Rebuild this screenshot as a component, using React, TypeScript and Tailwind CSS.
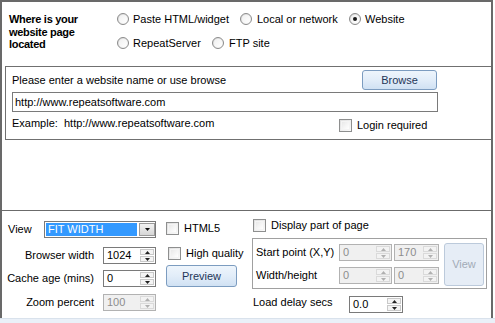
import React from 'react';

const Radio = ({ checked }: { checked?: boolean }) => (
    <span className="flex h-[12px] w-[12px] shrink-0 items-center justify-center rounded-full border border-[#8b8b8b] bg-linear-to-br from-[#d8d8d8] to-[#ffffff]">
        <span className="flex h-[8px] w-[8px] items-center justify-center rounded-full bg-linear-to-br from-[#f0f0f0] to-[#ffffff]">
            {checked && <span className="h-[4px] w-[4px] rounded-full bg-[#1a1a1a]" />}
        </span>
    </span>
);

const Check = () => (
    <span className="block h-[13px] w-[13px] shrink-0 border border-[#8e8f8f] bg-linear-to-br from-[#dedede] to-[#fbfbfb] p-px">
        <span className="block h-full w-full border border-[#f4f4f4] bg-linear-to-br from-[#e9e9e9] to-[#ffffff]" />
    </span>
);

const Arrow = ({ up, color }: { up?: boolean; color: string }) => (
    <svg width="5" height="3" viewBox="0 0 5 3">
        <polygon points={up ? '0,3 5,3 2.5,0' : '0,0 5,0 2.5,3'} fill={color} />
    </svg>
);

interface SpinProps {
    value: string;
    className: string;
    disabled?: boolean;
}

const Spin = ({ value, className, disabled }: SpinProps) => (
    <div
        className={`flex h-[17px] shrink-0 border ${
            disabled ? 'border-[#b2b2b2] bg-[#f0f0f0] text-[#8d8d8d]' : 'border-[#7a7a7a] bg-white text-black'
        } ${className}`}
    >
        <span className="flex flex-1 items-center pl-[3px] leading-none">{value}</span>
        <div className="flex w-[16px] flex-col gap-px p-px">
            <div className={`flex flex-1 items-center justify-center border ${disabled ? 'border-[#dadada] bg-[#f3f3f3]' : 'border-[#c9c9c9] bg-[#f4f4f4]'}`}>
                <Arrow up color={disabled ? '#b0b0b0' : '#222'} />
            </div>
            <div className={`flex flex-1 items-center justify-center border ${disabled ? 'border-[#dadada] bg-[#f3f3f3]' : 'border-[#c9c9c9] bg-[#f4f4f4]'}`}>
                <Arrow color={disabled ? '#b0b0b0' : '#222'} />
            </div>
        </div>
    </div>
);

const Button = ({ label, className }: { label: string; className: string }) => (
    <div
        className={`flex shrink-0 items-center justify-center rounded-[3px] border border-[#7c9cc0] bg-linear-to-b from-[#eef5fc] via-[#e2edf9] to-[#d0e1f3] text-[#1e3557] ${className}`}
    >
        {label}
    </div>
);

export default function App() {
    return (
        <div className="h-[323px] w-[495px] overflow-hidden bg-white font-['Liberation_Sans',Arial,sans-serif] text-[11px] text-black">
            <div className="flex h-[318px] w-[493px] flex-col border-x-2 border-t-2 border-[#696969]">
                {/* where is the page */}
                <div className="flex h-[208px] flex-col">
                    <div className="flex h-[64px]">
                        <div className="w-[115px] shrink-0 pl-[7px] pt-[11px] text-[11px] font-bold leading-[12.5px] tracking-[-0.3px]">
                            Where is your
                            <br />
                            website page
                            <br />
                            located
                        </div>
                        <div className="flex flex-col pt-[10px]">
                            <div className="flex h-[14px] items-center">
                                <div className="flex w-[123px] items-center gap-[4px]">
                                    <Radio />
                                    <span>Paste HTML/widget</span>
                                </div>
                                <div className="flex w-[109px] items-center gap-[5px]">
                                    <Radio />
                                    <span>Local or network</span>
                                </div>
                                <div className="flex items-center gap-[4px]">
                                    <Radio checked />
                                    <span>Website</span>
                                </div>
                            </div>
                            <div className="mt-[10px] flex h-[14px] items-center">
                                <div className="flex w-[95px] items-center gap-[4px]">
                                    <Radio />
                                    <span>RepeatServer</span>
                                </div>
                                <div className="flex items-center gap-[5px]">
                                    <Radio />
                                    <span>FTP site</span>
                                </div>
                            </div>
                        </div>
                    </div>

                    <div className="ml-[3px] h-[74px] border-y border-l border-[#707070] pl-[6px] pt-[3px]">
                        <div className="flex h-[20px] w-[426px] items-center justify-between">
                            <span>Please enter a website name or use browse</span>
                            <Button label="Browse" className="mr-px h-[20px] w-[75px]" />
                        </div>
                        <div className="mt-[2px] flex h-[20px] w-[426px] items-center border border-[#7a7a7a] pl-[2px]">
                            http://www.repeatsoftware.com
                        </div>
                        <div className="mt-[6px] flex h-[14px] w-[426px] items-center">
                            <span className="mb-[3px] w-[327px]">Example:&nbsp;&nbsp;http://www.repeatsoftware.com</span>
                            <Check />
                            <span className="ml-[5px]">Login required</span>
                        </div>
                    </div>
                </div>

                <div className="h-px bg-[#6b6b6b]" />

                {/* display options */}
                <div className="flex h-[107px]">
                    <div className="flex w-[164px] shrink-0 flex-col">
                        <div className="mt-[10px] flex h-[17px] items-center">
                            <span className="w-[42px] pl-[6px]">View</span>
                            <div className="flex h-[17px] w-[112px] items-stretch border border-[#7a7a7a] bg-white py-px pl-px">
                                <div className="flex w-[91px] items-center bg-[#3399ff] pl-[2px] text-white">FIT WIDTH</div>
                                <div className="ml-[2px] flex w-[16px] items-center justify-center border border-[#9a9a9a] bg-linear-to-b from-[#f3f3f3] to-[#d6d6d6]">
                                    <Arrow color="#111" />
                                </div>
                            </div>
                        </div>
                        <div className="mt-[9px] flex items-center">
                            <span className="w-[92px] text-right">Browser width</span>
                            <Spin value="1024" className="ml-[9px] w-[53px]" />
                        </div>
                        <div className="mt-[6px] flex items-center">
                            <span className="w-[92px] text-right">Cache age (mins)</span>
                            <Spin value="0" className="ml-[9px] w-[53px]" />
                        </div>
                        <div className="mt-[7px] flex items-center">
                            <span className="w-[92px] text-right">Zoom percent</span>
                            <Spin value="100" disabled className="ml-[9px] w-[53px]" />
                        </div>
                    </div>

                    <div className="flex w-[86px] shrink-0 flex-col">
                        <div className="mt-[11px] flex h-[13px] items-center">
                            <Check />
                            <span className="ml-[5px]">HTML5</span>
                        </div>
                        <div className="ml-[2px] mt-[12px] flex h-[13px] items-center">
                            <Check />
                            <span className="ml-[5px]">High quality</span>
                        </div>
                        <Button label="Preview" className="mt-[5px] h-[22px] w-[71px]" />
                    </div>

                    <div className="flex flex-col">
                        <div className="ml-px mt-[8px] flex h-[13px] items-center">
                            <Check />
                            <span className="ml-[5px]">Display part of page</span>
                        </div>
                        <div className="mt-[6px] flex h-[51px] w-[235px] border border-[#a0a0a0]">
                            <div className="flex flex-col pl-[3px] pt-[5px]">
                                <div className="flex items-center">
                                    <span className="w-[83px]">Start point (X,Y)</span>
                                    <Spin value="0" disabled className="w-[53px]" />
                                    <Spin value="170" disabled className="ml-[2px] w-[45px]" />
                                </div>
                                <div className="mt-[6px] flex items-center">
                                    <span className="w-[83px]">Width/height</span>
                                    <Spin value="0" disabled className="w-[53px]" />
                                    <Spin value="0" disabled className="ml-[2px] w-[45px]" />
                                </div>
                            </div>
                            <div className="ml-[5px] mt-[4px] flex h-[43px] w-[40px] items-center justify-center rounded-[3px] border border-[#bccadb] bg-[#e6edf6] text-[#a2abb6]">
                                View
                            </div>
                        </div>
                        <div className="ml-px mt-[7px] flex items-start">
                            <span className="w-[96px] leading-[13px]">Load delay secs</span>
                            <Spin value="0.0" className="w-[54px]" />
                        </div>
                    </div>
                </div>
            </div>
            <div className="h-[5px] w-full border-t border-[#d9e2ec] bg-[#eaf0f8]" />
        </div>
    );
}
